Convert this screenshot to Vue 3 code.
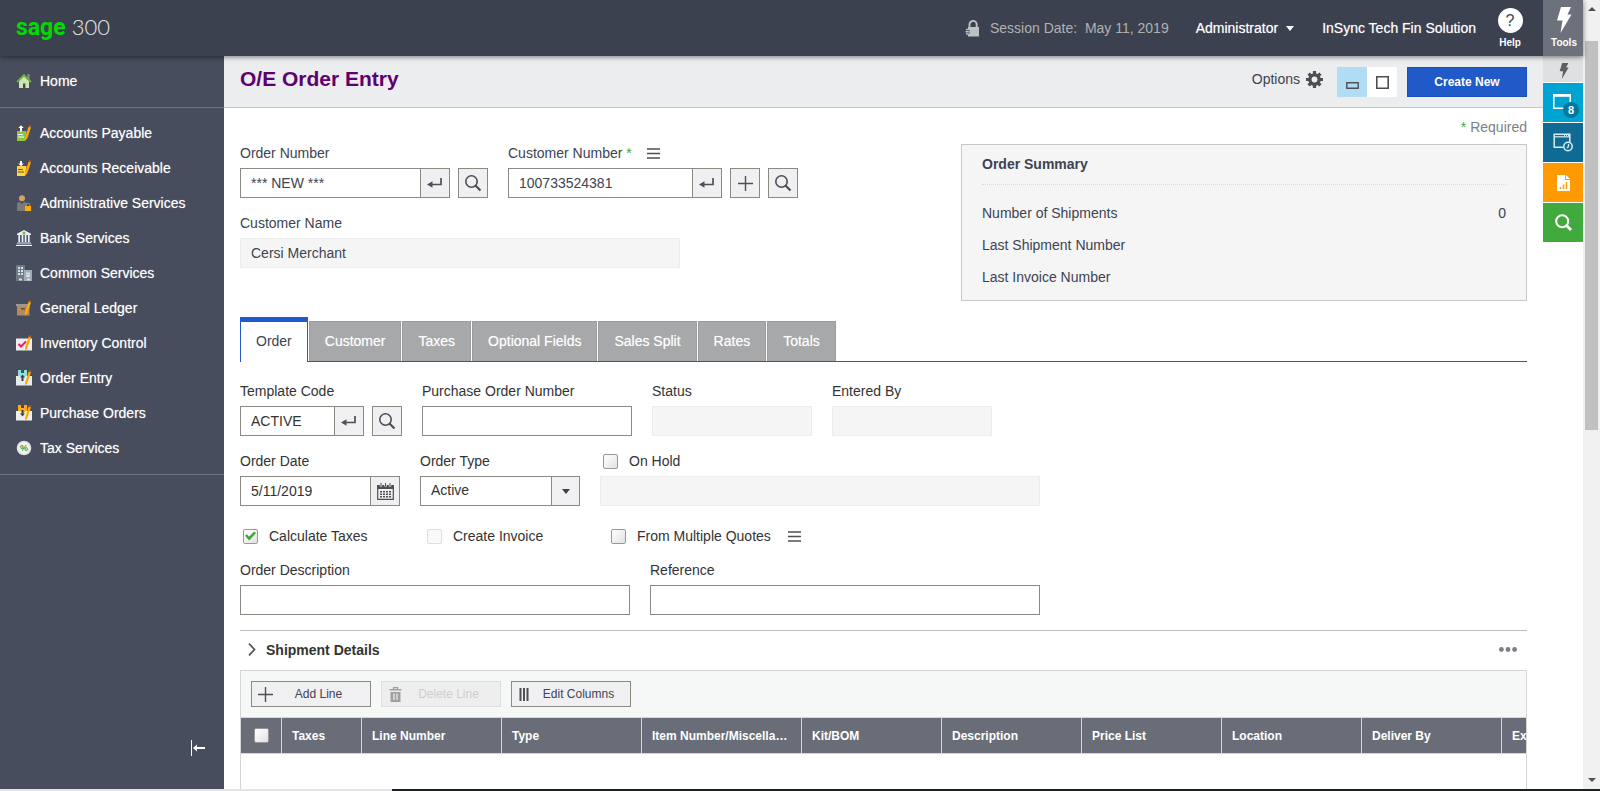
<script setup>
import { ref } from 'vue'

const modules = [
  { id: 'ap', label: 'Accounts Payable' },
  { id: 'ar', label: 'Accounts Receivable' },
  { id: 'as', label: 'Administrative Services' },
  { id: 'bk', label: 'Bank Services' },
  { id: 'cs', label: 'Common Services' },
  { id: 'gl', label: 'General Ledger' },
  { id: 'ic', label: 'Inventory Control' },
  { id: 'oe', label: 'Order Entry' },
  { id: 'po', label: 'Purchase Orders' },
  { id: 'tx', label: 'Tax Services' }
]

const tabs = ['Order', 'Customer', 'Taxes', 'Optional Fields', 'Sales Split', 'Rates', 'Totals']
const activeTab = ref('Order')

const columns = [
  { label: 'Taxes', size: 'narrow' },
  { label: 'Line Number', size: 'normal' },
  { label: 'Type', size: 'normal' },
  { label: 'Item Number/Miscellaneous', size: 'wide' },
  { label: 'Kit/BOM', size: 'normal' },
  { label: 'Description', size: 'normal' },
  { label: 'Price List', size: 'normal' },
  { label: 'Location', size: 'normal' },
  { label: 'Deliver By', size: 'normal' },
  { label: 'Exp. Ship Date', size: 'normal' }
]

const orderNumber = ref('*** NEW ***')
const customerNumber = ref('100733524381')
const customerName = ref('Cersi Merchant')
const templateCode = ref('ACTIVE')
const purchaseOrder = ref('')
const orderDate = ref('5/11/2019')
const orderType = ref('Active')
const onHold = ref(false)
const calculateTaxes = ref(true)
const multipleQuotes = ref(false)
const description = ref('')
const reference = ref('')
const allLines = ref(false)
</script>

<template>
  <div class="app">
    <svg class="defs" width="0" height="0" aria-hidden="true">
      <symbol id="i-enter" viewBox="0 0 16 16">
        <path d="M14 3v6.500H5" fill="none" stroke="#4d4f53" stroke-width="1.700" />
        <path d="M0 9.500l5.500-3.300v6.600z" fill="#4d4f53" />
      </symbol>
      <symbol id="i-search" viewBox="0 0 18 18">
        <circle cx="7.500" cy="7.500" r="5.700" fill="none" stroke="#4d4f53" stroke-width="1.600" />
        <path d="M11.500 11.500l5 5" stroke="#4d4f53" stroke-width="2.200" />
      </symbol>
      <symbol id="i-plus" viewBox="0 0 15 15">
        <path d="M7.500 0v15M0 7.500h15" stroke="#4d4f53" stroke-width="1.400" />
      </symbol>
      <symbol id="i-menu" viewBox="0 0 13 11">
        <path d="M0 1h13M0 5.500h13M0 10h13" stroke="#4d4f53" stroke-width="1.600" />
      </symbol>
      <symbol id="i-pencil" viewBox="0 0 16 16">
        <path d="M12.700 1.400l2.300.8-3.800 11.300-2.200 2.300.1-3.200z" fill="#ffab00" />
        <path d="M13.200 0l2.300.8-.6 1.800-2.300-.8z" fill="#b8501c" />
      </symbol>
      <symbol id="i-bolt" viewBox="0 0 16 26">
        <path d="M5 0h10l-3.500 7.500H15.500L4.500 26l2-12.500H1z" />
      </symbol>
    </svg>

    <div class="window">
      <header class="topbar">
        <a href="#" class="logo"><span class="sage">sage</span> <span class="threehundred">300</span></a>
        <div class="session">
          <svg width="15" height="17" viewBox="0 0 15 17" aria-hidden="true">
            <path d="M4.500 8V4.500a3.600 3.600 0 0 1 7.200 0V8" fill="none" stroke="#bfc0c2" stroke-width="1.900" />
            <path d="M3 7h11v9.500H3z" fill="#bfc0c2" />
            <path d="M1 9.500h3M.5 11.800H4M1 14h3" stroke="#bfc0c2" stroke-width="1.400" />
            <path d="M3 10.700h1.800M3 13h1.800" stroke="#3b414e" stroke-width="1" />
          </svg>
          <span>Session Date:&nbsp; May 11, 2019</span>
        </div>
        <button type="button" class="top-link admin">Administrator
          <svg width="8" height="5" viewBox="0 0 8 5" aria-hidden="true"><path d="M0 0h8L4 5z" fill="#fff" /></svg>
        </button>
        <span class="top-link company">InSync Tech Fin Solution</span>
        <button type="button" class="help">
          <span class="help-mark">?</span>
          <span class="small">Help</span>
        </button>
        <button type="button" class="tools">
          <svg width="16" height="26" fill="#fff" aria-hidden="true"><use href="#i-bolt" /></svg>
          <span class="small">Tools</span>
        </button>
      </header>

      <div class="body">
        <nav class="sidebar" aria-label="Modules">
          <a href="#" class="nav-item home">
            <svg class="nav-icon" viewBox="0 0 16 16" aria-hidden="true">
              <path d="M11.500 1h2v5h-2z" fill="#8d9095" />
              <path d="M3 8l5-5 5 5v7H3z" fill="#cfe5b6" />
              <path d="M1 9l7-7 7 7" fill="none" stroke="#71ae35" stroke-width="1.900" />
              <path d="M7 10.500h2.400V15H7z" fill="#3d5340" />
            </svg>
            Home
          </a>
          <ul class="nav-list">
            <li v-for="m in modules" :key="m.id">
              <a href="#" class="nav-item">
                <svg class="nav-icon" viewBox="0 0 16 16" aria-hidden="true">
                  <template v-if="m.id === 'ap'">
                    <path d="M1 6h9.500L9 16H1z" fill="#8cc63f" />
                    <path d="M2 9.500h5M2 12h6" stroke="#fff" stroke-width="1.200" />
                    <path d="M5 .3L7.800 3H6v3.500H4V3H2.300z" fill="#fff" />
                    <use href="#i-pencil" />
                  </template>
                  <template v-else-if="m.id === 'ar'">
                    <path d="M1 6h9.500L9 16H1z" fill="#ffd23f" />
                    <path d="M2 9.500h5M2 12h6" stroke="#6b5a20" stroke-width="1.200" />
                    <path d="M4 1h2v2.500h1.800L5 6.300 2.200 3.500H4z" fill="#fff" />
                    <use href="#i-pencil" />
                  </template>
                  <template v-else-if="m.id === 'as'">
                    <circle cx="6" cy="3.200" r="3" fill="#d5a06a" />
                    <path d="M1 16V10q0-3 3-3l2 2 2-2q3 0 3 3v6z" fill="#7b7b7b" />
                    <path d="M10.300 11.500V10a1.800 1.800 0 0 1 3.600 0v1.500" fill="none" stroke="#8d8d8d" stroke-width="1" />
                    <path d="M9 11h6v5H9z" fill="#ffab00" />
                  </template>
                  <template v-else-if="m.id === 'bk'">
                    <path d="M8 0l7 3.700V5H1V3.700z" fill="#e9f1fb" />
                    <path d="M3.200 5v7M6.500 5v7M9.600 5v7M12.800 5v7" stroke="#e9f1fb" stroke-width="1.700" />
                    <path d="M1 13h14M0 15.400h16" stroke="#e9f1fb" stroke-width="1.200" />
                    <circle cx="8" cy="3.200" r="1.600" fill="#7ac142" />
                  </template>
                  <template v-else-if="m.id === 'cs'">
                    <path d="M0 0h9v16H0z" fill="#757a80" />
                    <path d="M8 5h8v11H8z" fill="#a6a9ad" />
                    <path d="M2 3h2M5 3h2M2 6h2M5 6h2M2 9h2M5 9h2M10 8.500h4M10 11h4M3 14.500h3M11 14.500h3" stroke="#c6e3fb" stroke-width="1.900" />
                  </template>
                  <template v-else-if="m.id === 'gl'">
                    <path d="M1 6h12.500v9.500H1z" fill="#b28a61" />
                    <path d="M0 4h14v2.200H0z" fill="#9a9a9a" />
                    <path d="M5 8h4v1.500H5z" fill="#6e4d2b" />
                    <use href="#i-pencil" />
                  </template>
                  <template v-else-if="m.id === 'ic'">
                    <path d="M0 3.500h16v12H0z" fill="#ededed" />
                    <path d="M2.500 9l2.500 2.500 5-5" fill="none" stroke="#e0206a" stroke-width="2" />
                    <use href="#i-pencil" />
                  </template>
                  <template v-else-if="m.id === 'oe'">
                    <path d="M0 6h16v9.500H0z" fill="#e8eaeb" />
                    <path d="M2 0h3v3h3V0h3v6H9.500L8 8 4 6H2z" fill="#8fe0dc" />
                    <path d="M5.500 11V7.500H4L6.500 4.500 9 7.500H7.500V11z" fill="#36454f" />
                    <use href="#i-pencil" />
                  </template>
                  <template v-else-if="m.id === 'po'">
                    <path d="M0 6h16v9.500H0z" fill="#f0efec" />
                    <path d="M2 0h3v3h3V0h3v6H9.500L8 8 4 6H2z" fill="#fbab18" />
                    <path d="M5.500 5v3.500H4l2.500 3L9 8.500H7.500V5z" fill="#4b4238" />
                    <use href="#i-pencil" />
                  </template>
                  <template v-else>
                    <circle cx="8" cy="8" r="7.300" fill="#dfe1df" />
                    <circle cx="8" cy="8" r="5.800" fill="#f2f4f2" />
                    <text x="8" y="11.200" class="percent">%</text>
                  </template>
                </svg>
                {{ m.label }}
              </a>
            </li>
          </ul>
          <button type="button" class="collapse" aria-label="Collapse menu">
            <svg width="15" height="16" viewBox="0 0 15 16" aria-hidden="true">
              <path d="M.5 0v16" stroke="#fff" stroke-width="1" />
              <path d="M14 8H5" stroke="#fff" stroke-width="2" />
              <path d="M2 8l4-3.500v7z" fill="#fff" />
            </svg>
          </button>
        </nav>

        <main class="page">
          <div class="page-head">
            <h1>O/E Order Entry</h1>
            <button type="button" class="options">Options
              <svg width="17" height="17" viewBox="0 0 17 17" aria-hidden="true">
                <circle cx="8.500" cy="8.500" r="4.600" fill="none" stroke="#4d4f53" stroke-width="3.400" />
                <g stroke="#4d4f53" stroke-width="3.200">
                  <path d="M8.500 0v3.500M8.500 13.500V17M0 8.500h3.500M13.500 8.500H17" />
                  <path d="M2.600 2.600l2.400 2.400M12 12l2.400 2.400M2.600 14.400L5 12M12 5l2.400-2.400" />
                </g>
              </svg>
            </button>
            <div class="view-toggle">
              <button type="button" class="view on" aria-label="Compact view">
                <svg width="13" height="13" viewBox="0 0 13 13" aria-hidden="true"><path d="M.8 6.800h11.400v5.400H.8z" fill="none" stroke="#4d4f53" stroke-width="1.400" /></svg>
              </button>
              <button type="button" class="view" aria-label="Full view">
                <svg width="13" height="13" viewBox="0 0 13 13" aria-hidden="true"><path d="M.8.8h11.400v11.400H.8z" fill="none" stroke="#4d4f53" stroke-width="1.600" /></svg>
              </button>
            </div>
            <button type="button" class="create">Create New</button>
          </div>

          <div class="content">
            <p class="required"><span class="star">*</span> Required</p>

            <div class="upper">
              <div class="stack">
                <div class="line">
                  <div class="field">
                    <label for="order-number">Order Number</label>
                    <div class="controls">
                      <div class="combo w210">
                        <input id="order-number" v-model="orderNumber" type="text">
                        <button type="button" class="sq" aria-label="Load order"><svg width="16" height="16"><use href="#i-enter" /></svg></button>
                      </div>
                      <button type="button" class="sq" aria-label="Find order"><svg width="18" height="18"><use href="#i-search" /></svg></button>
                    </div>
                  </div>
                  <div class="field">
                    <div class="label-row">
                      <label for="customer-number">Customer Number <span class="star">*</span></label>
                      <button type="button" class="bare" aria-label="Customer menu"><svg width="13" height="11"><use href="#i-menu" /></svg></button>
                    </div>
                    <div class="controls">
                      <div class="combo w214">
                        <input id="customer-number" v-model="customerNumber" type="text">
                        <button type="button" class="sq" aria-label="Load customer"><svg width="16" height="16"><use href="#i-enter" /></svg></button>
                      </div>
                      <button type="button" class="sq" aria-label="Add customer"><svg width="15" height="15"><use href="#i-plus" /></svg></button>
                      <button type="button" class="sq" aria-label="Find customer"><svg width="18" height="18"><use href="#i-search" /></svg></button>
                    </div>
                  </div>
                </div>
                <div class="field">
                  <label for="customer-name">Customer Name</label>
                  <input id="customer-name" v-model="customerName" class="w440" type="text" disabled>
                </div>
              </div>

              <section class="summary">
                <h2>Order Summary</h2>
                <dl>
                  <div><dt>Number of Shipments</dt><dd>0</dd></div>
                  <div><dt>Last Shipment Number</dt><dd></dd></div>
                  <div><dt>Last Invoice Number</dt><dd></dd></div>
                </dl>
              </section>
            </div>

            <div class="tabs" role="tablist">
              <button
                v-for="t in tabs"
                :key="t"
                type="button"
                role="tab"
                class="tab"
                :class="{ active: t === activeTab }"
                :aria-selected="t === activeTab"
                @click="activeTab = t"
              >{{ t }}</button>
            </div>

            <div class="panel stack">
              <div class="line">
                <div class="field">
                  <label for="template-code">Template Code</label>
                  <div class="controls">
                    <div class="combo w124">
                      <input id="template-code" v-model="templateCode" type="text">
                      <button type="button" class="sq" aria-label="Load template"><svg width="16" height="16"><use href="#i-enter" /></svg></button>
                    </div>
                    <button type="button" class="sq" aria-label="Find template"><svg width="18" height="18"><use href="#i-search" /></svg></button>
                  </div>
                </div>
                <div class="field">
                  <label for="po-number">Purchase Order Number</label>
                  <input id="po-number" v-model="purchaseOrder" class="w210" type="text">
                </div>
                <div class="field">
                  <label for="status">Status</label>
                  <input id="status" class="w160" type="text" disabled>
                </div>
                <div class="field">
                  <label for="entered-by">Entered By</label>
                  <input id="entered-by" class="w160" type="text" disabled>
                </div>
              </div>

              <div class="line">
                <div class="field">
                  <label for="order-date">Order Date</label>
                  <div class="combo w160">
                    <input id="order-date" v-model="orderDate" type="text">
                    <button type="button" class="sq" aria-label="Pick a date">
                      <svg width="17" height="17" viewBox="0 0 17 17" aria-hidden="true">
                        <path d="M.7 2.500h15.600v13.800H.7z" fill="none" stroke="#4d4f53" stroke-width="1.200" />
                        <path d="M0 2h17v4H0z" fill="#4d4f53" />
                        <path d="M4 0v3.500M8.500 0v3.500M13 0v3.500" stroke="#f0f0f2" stroke-width="2.400" />
                        <path d="M4 0v3M8.500 0v3M13 0v3" stroke="#4d4f53" stroke-width="1" />
                        <path d="M3 8.700h11M3 11.200h11M3 13.700h11" stroke="#4d4f53" stroke-width="1.500" stroke-dasharray="2 1" />
                      </svg>
                    </button>
                  </div>
                </div>
                <div class="field">
                  <label for="order-type">Order Type</label>
                  <div class="select w160">
                    <select id="order-type" v-model="orderType">
                      <option>Active</option>
                      <option>Future</option>
                      <option>Standing</option>
                      <option>Quote</option>
                    </select>
                    <span class="arrow" aria-hidden="true"><svg width="8" height="5" viewBox="0 0 8 5"><path d="M0 0h8L4 5z" fill="#3f4045" /></svg></span>
                  </div>
                </div>
                <div class="field">
                  <label class="check"><input v-model="onHold" type="checkbox">On Hold</label>
                  <input class="w440" type="text" aria-label="On hold reason" disabled>
                </div>
              </div>

              <div class="checks">
                <label class="check"><input v-model="calculateTaxes" type="checkbox">Calculate Taxes</label>
                <label class="check"><input type="checkbox" disabled>Create Invoice</label>
                <div class="check-menu">
                  <label class="check"><input v-model="multipleQuotes" type="checkbox">From Multiple Quotes</label>
                  <button type="button" class="bare" aria-label="Quotes menu"><svg width="13" height="11"><use href="#i-menu" /></svg></button>
                </div>
              </div>

              <div class="line">
                <div class="field">
                  <label for="description">Order Description</label>
                  <input id="description" v-model="description" class="w390" type="text">
                </div>
                <div class="field">
                  <label for="reference">Reference</label>
                  <input id="reference" v-model="reference" class="w390" type="text">
                </div>
              </div>
            </div>

            <div class="shipment-head">
              <button type="button" class="expander">
                <svg width="8" height="13" viewBox="0 0 8 13" aria-hidden="true"><path d="M1 .7l5.500 5.800L1 12.300" fill="none" stroke="#4d4f53" stroke-width="1.700" /></svg>
                Shipment Details
              </button>
              <button type="button" class="bare more" aria-label="More">
                <svg width="18" height="5" viewBox="0 0 18 5" aria-hidden="true" fill="#7c7f89"><circle cx="2.400" cy="2.500" r="2.400" /><circle cx="9" cy="2.500" r="2.400" /><circle cx="15.600" cy="2.500" r="2.400" /></svg>
              </button>
            </div>

            <div class="grid">
              <div class="toolbar">
                <button type="button" class="tool"><svg width="15" height="15"><use href="#i-plus" /></svg><span>Add Line</span></button>
                <button type="button" class="tool" disabled>
                  <svg width="15" height="15" viewBox="0 0 15 15" aria-hidden="true">
                    <path d="M5.500 2V.6h4V2M1.500 2.800h12" fill="none" stroke="#a0a0a0" stroke-width="1.400" />
                    <path d="M2.500 5h10v10h-10z" fill="#a0a0a0" />
                    <path d="M6 6.500v6.500M9 6.500v6.500" stroke="#eee" stroke-width="1.200" />
                  </svg>
                  <span>Delete Line</span>
                </button>
                <button type="button" class="tool">
                  <svg width="15" height="15" viewBox="0 0 15 15" aria-hidden="true"><path d="M2.500 1v13M6 1v13M9.500 1v13" stroke="#4d4f53" stroke-width="2" /></svg>
                  <span>Edit Columns</span>
                </button>
              </div>
              <table>
                <thead>
                  <tr>
                    <th class="pick"><input v-model="allLines" type="checkbox" aria-label="Select all lines"></th>
                    <th v-for="c in columns" :key="c.label" :class="c.size">{{ c.label }}</th>
                  </tr>
                </thead>
                <tbody></tbody>
              </table>
            </div>
          </div>
        </main>

        <aside class="helpers" aria-label="Tools">
          <button type="button" class="helper bolt" aria-label="Shortcuts"><svg width="10" height="16" fill="#5c5e63"><use href="#i-bolt" /></svg></button>
          <button type="button" class="helper windows" aria-label="Open windows">
            <svg width="18" height="15" viewBox="0 0 18 15" aria-hidden="true">
              <path d="M.8.8h16.400v13.400H.8z" fill="none" stroke="#fff" stroke-width="1.500" />
              <path d="M0 0h18v2.800H0z" fill="#fff" />
            </svg>
            <span class="badge">8</span>
          </button>
          <button type="button" class="helper recent" aria-label="Recent windows">
            <svg width="20" height="19" viewBox="0 0 20 19" aria-hidden="true">
              <path d="M10 14.300H1.200V1.200h15.600v8" fill="none" stroke="#d7ecf5" stroke-width="1.500" />
              <path d="M1 3.800h16" stroke="#d7ecf5" stroke-width="1.200" />
              <path d="M11 2h5" stroke="#d7ecf5" stroke-width="1.800" stroke-dasharray="1 1" />
              <circle cx="15" cy="13.500" r="4.200" fill="#0f6b94" stroke="#d7ecf5" stroke-width="1.500" />
              <path d="M15.500 11v2.500l-1.500 1.500" fill="none" stroke="#d7ecf5" stroke-width="1.300" />
            </svg>
          </button>
          <button type="button" class="helper report" aria-label="Reports">
            <svg width="13" height="16" viewBox="0 0 13 16" aria-hidden="true">
              <path d="M0 0h8v5h5v11H0z" fill="#fff" />
              <path d="M9 0l4 4H9z" fill="#fff" />
              <path d="M3.500 14v-2M6.500 14V9.500M9.500 14V7" stroke="#ff9b00" stroke-width="1.500" />
            </svg>
          </button>
          <button type="button" class="helper find" aria-label="Search">
            <svg width="17" height="17" viewBox="0 0 17 17" aria-hidden="true">
              <circle cx="7.200" cy="7.200" r="6" fill="none" stroke="#fff" stroke-width="2" />
              <path d="M11.500 11.500l4.500 4.500" stroke="#fff" stroke-width="2.800" />
            </svg>
          </button>
        </aside>
      </div>
    </div>

    <div class="scrollbar" aria-hidden="true">
      <svg width="8" height="4" viewBox="0 0 8 4"><path d="M0 4h8L4 0z" fill="#505050" /></svg>
      <div class="track"><div class="thumb"></div></div>
      <svg width="8" height="4" viewBox="0 0 8 4"><path d="M0 0h8L4 4z" fill="#505050" /></svg>
    </div>
    <div class="dock" aria-hidden="true"></div>
  </div>
</template>

<style>
body {
  margin: 0;
}
</style>

<style scoped>
.app,
.app * {
  box-sizing: border-box;
}

.app {
  display: grid;
  grid-template-columns: 1fr 17px;
  grid-template-rows: 1fr 2px;
  height: 100vh;
  overflow: hidden;
  background: #fff;
  color: #3d4351;
  font: 14px/18px "Liberation Sans", Arial, sans-serif;
}

.defs {
  position: absolute;
}

button {
  display: flex;
  align-items: center;
  justify-content: center;
  margin: 0;
  padding: 0;
  border: 0;
  background: none;
  color: inherit;
  font: inherit;
  cursor: pointer;
}

svg {
  display: block;
  flex: none;
}

a {
  color: inherit;
  text-decoration: none;
}

.window {
  display: flex;
  flex-direction: column;
  min-width: 0;
  min-height: 0;
}

/* Top bar */
.topbar {
  position: relative;
  z-index: 2;
  display: flex;
  align-items: center;
  height: 56px;
  flex: none;
  background: #3b414e;
  color: #fff;
  box-shadow: 0 1px 5px rgba(0, 0, 0, 0.5);
}

.logo {
  display: flex;
  align-items: baseline;
  gap: 6px;
  margin-right: auto;
  padding: 0 0 2px 16px;
}

.sage {
  color: #00dc00;
  font: 700 23px/36px Roboto, sans-serif;
}

.threehundred {
  color: #e6e7e9;
  font: 300 22px/36px Lato, sans-serif;
}

.session {
  display: flex;
  align-items: center;
  gap: 10px;
  margin-right: 27px;
  color: #b0b1b4;
}

.top-link,
.nav-item,
.tab {
  text-shadow: 0 0 1px rgba(255, 255, 255, 0.5);
  white-space: nowrap;
}

.admin {
  gap: 8px;
  margin-right: 28px;
}

.company {
  margin-right: 21px;
}

.help,
.tools {
  flex-direction: column;
  gap: 4px;
  height: 56px;
}

.help {
  width: 26px;
  margin-right: 20px;
}

.help-mark {
  width: 25px;
  height: 25px;
  border-radius: 50%;
  background: #fff;
  color: #3b414e;
  font-size: 16px;
  line-height: 25px;
}

.small {
  font-size: 10px;
  font-weight: 700;
  line-height: 12px;
}

.tools {
  width: 40px;
  padding-left: 2px;
  background: #6d717b;
}

/* Body */
.body {
  display: flex;
  flex: 1;
  min-height: 0;
}

.sidebar {
  display: flex;
  flex-direction: column;
  flex: none;
  width: 224px;
  background: #474d5c;
  color: #fff;
}

.nav-item {
  display: flex;
  align-items: center;
  gap: 8px;
  height: 35px;
  padding-left: 16px;
}

.home {
  height: 52px;
  padding-bottom: 2px;
  border-bottom: 1px solid #6d7280;
}

.nav-list {
  margin: 0;
  padding: 7px 0 9px;
  border-bottom: 1px solid #6d7280;
  list-style: none;
}

.nav-icon {
  width: 16px;
  height: 16px;
}

.percent {
  fill: #2f9e44;
  font: 700 9px "Liberation Sans", sans-serif;
  text-anchor: middle;
}

.collapse {
  width: 15px;
  height: 16px;
  margin: auto 18px 33px auto;
}

.page {
  flex: 1;
  min-width: 0;
  overflow: hidden;
}

.page-head {
  display: flex;
  align-items: flex-start;
  height: 52px;
  padding: 11px 16px 0;
  border-bottom: 1px solid #c7c8ca;
  background: #ecedef;
}

h1 {
  margin: 0 auto 0 0;
  color: #5e0070;
  font-size: 21px;
  line-height: 24px;
}

.options {
  gap: 6px;
  height: 24px;
  margin-right: 14px;
}

.view-toggle {
  display: flex;
  margin-right: 10px;
}

.view {
  width: 30px;
  height: 30px;
  background: #fff;
}

.view.on {
  background: #b0ddf3;
}

.create {
  width: 120px;
  height: 30px;
  border: 1px solid #1b50b8;
  background: #2059c8;
  color: #fff;
  font-size: 12px;
  font-weight: 700;
}

.content {
  padding: 10px 16px 0;
}

.required {
  margin: 0;
  color: #7d7f84;
  text-align: right;
}

.star {
  color: #43a53c;
}

.upper {
  display: flex;
  align-items: flex-start;
  justify-content: space-between;
  margin-top: 8px;
}

.stack {
  display: flex;
  flex-direction: column;
  gap: 16px;
}

.line {
  display: flex;
  gap: 20px;
}

.field {
  display: flex;
  flex-direction: column;
  align-items: flex-start;
  gap: 6px;
}

.controls {
  display: flex;
  gap: 8px;
}

.label-row {
  display: flex;
  align-items: center;
  gap: 15px;
}

.w124 { width: 124px; }
.w160 { width: 160px; }
.w210 { width: 210px; }
.w214 { width: 214px; }
.w390 { width: 390px; }
.w440 { width: 440px; }

input[type="text"],
select {
  height: 30px;
  margin: 0;
  padding: 0 10px;
  border: 1px solid #8c8882;
  border-radius: 0;
  background: #fff;
  color: inherit;
  font: inherit;
}

input[type="text"]:disabled {
  border-color: #ededed;
  background: #f5f5f5;
}

.combo {
  display: flex;
}

.combo input {
  flex: 1;
  min-width: 0;
}

.combo .sq {
  margin-left: -1px;
}

.sq {
  flex: none;
  width: 30px;
  height: 30px;
  border: 1px solid #8c8882;
  background: #f0f0f2;
}

.select {
  position: relative;
}

select {
  width: 100%;
  padding-bottom: 2px;
  appearance: none;
}

.arrow {
  position: absolute;
  top: 1px;
  right: 1px;
  bottom: 1px;
  display: flex;
  align-items: center;
  justify-content: center;
  width: 28px;
  border-left: 1px solid #8c8882;
  background: #f0f0f2;
  pointer-events: none;
}

.check {
  display: flex;
  align-items: center;
  gap: 11px;
  padding-left: 3px;
}

input[type="checkbox"] {
  display: grid;
  place-items: center;
  flex: none;
  width: 15px;
  height: 15px;
  margin: 0;
  border: 1px solid #98989a;
  border-radius: 2px;
  background: linear-gradient(135deg, #fff, #e2e2e2);
  appearance: none;
}

input[type="checkbox"]:disabled {
  border-color: #dedede;
  background: #f9f9f9;
}

input[type="checkbox"]:checked::before {
  content: "";
  width: 11px;
  height: 9px;
  background: #3fa535;
  clip-path: polygon(0 48%, 18% 30%, 36% 58%, 84% 0, 100% 16%, 38% 100%);
}

.summary {
  width: 566px;
  padding: 10px 20px 7px;
  border: 1px solid #c7c8ca;
  background: #f5f5f5;
}

h2 {
  margin: 0 0 12px;
  padding-bottom: 11px;
  border-bottom: 1px dotted #d9d9d9;
  font-size: 14px;
  line-height: 18px;
}

dl,
dd {
  margin: 0;
}

dl div {
  display: flex;
  justify-content: space-between;
  line-height: 32px;
}

/* Tabs */
.tabs {
  display: flex;
  align-items: flex-end;
  gap: 1px;
  margin-top: 16px;
  border-bottom: 1px solid #2059c8;
}

.tab {
  height: 40px;
  padding: 0 15px 1px;
  border: 1px solid #9b9c9e;
  border-bottom: 0;
  background: #a7a8aa;
  color: #fff;
}

.tab.active {
  height: 45px;
  margin-bottom: -1px;
  padding-bottom: 3px;
  border: 1px solid #2059c8;
  border-top-width: 5px;
  border-bottom: 0;
  background: #fff;
  color: #3d4351;
  text-shadow: none;
}

.panel {
  padding-top: 20px;
  color: #333;
}

.checks {
  display: grid;
  grid-template-columns: 184px 184px auto;
  justify-content: start;
  padding-top: 5px;
}

.check-menu {
  display: flex;
  align-items: center;
  gap: 17px;
}

/* Shipment details */
.shipment-head {
  display: flex;
  align-items: center;
  justify-content: space-between;
  height: 40px;
  margin-top: 15px;
  padding: 0 10px 2px 8px;
  border-top: 1px solid #bdbdbd;
}

.expander {
  gap: 10px;
  color: #333;
  font-weight: 700;
}

.grid {
  overflow: hidden;
  height: 200px;
  border: 1px solid #d4d5d7;
}

.toolbar {
  display: flex;
  gap: 10px;
  padding: 10px;
  background: #f6f8f7;
}

.tool {
  width: 120px;
  height: 26px;
  padding: 0 6px;
  border: 1px solid #8c8882;
  background: #f0f0f2;
  font-size: 12px;
}

.tool span {
  flex: 1;
}

.tool:disabled {
  border-color: #dedede;
  background: #eee;
  color: #cfcfcf;
}

table {
  width: 1400px;
  border-collapse: separate;
  border-spacing: 0;
  table-layout: fixed;
}

th {
  overflow: hidden;
  height: 37px;
  padding: 0 10px;
  border: solid #d4d5d7;
  border-width: 1px 0 1px 1px;
  background: #696d78;
  color: #fff;
  font-size: 12px;
  text-align: left;
  text-overflow: ellipsis;
  white-space: nowrap;
}

.pick {
  width: 40px;
  padding: 0 13px;
  border-left: 0;
}

.narrow { width: 80px; }
.normal { width: 140px; }
.wide { width: 160px; }

/* Right helper strip */
.helpers {
  display: flex;
  flex-direction: column;
  flex: none;
  gap: 1px;
  width: 40px;
}

.helper {
  position: relative;
  height: 39px;
}

.bolt {
  height: 26px;
  padding: 4px 0 0 2px;
  background: #dfe0e1;
}

.windows {
  padding: 0 2px 2px 0;
  background: #00a4d3;
}

.recent {
  background: #0f6b94;
}

.report {
  background: #ff9b00;
}

.find {
  background: #40aa3f;
}

.badge {
  position: absolute;
  right: 4px;
  bottom: 4px;
  width: 16px;
  height: 16px;
  border-radius: 50%;
  background: #03789e;
  color: #fff;
  font-size: 11px;
  font-weight: 700;
  line-height: 16px;
}

/* Scrollbar and bottom edge */
.scrollbar {
  display: flex;
  flex-direction: column;
  align-items: center;
  padding: 7px 2px;
  background: #f1f1f1;
}

.track {
  display: flex;
  flex: 1;
  width: 100%;
  padding: 30px 0;
}

.thumb {
  width: 13px;
  height: 55%;
  background: #c1c1c1;
}

.dock {
  grid-column: 1 / -1;
  background: linear-gradient(90deg, #e4e4e4 392px, #1e1f22 392px);
}
</style>
